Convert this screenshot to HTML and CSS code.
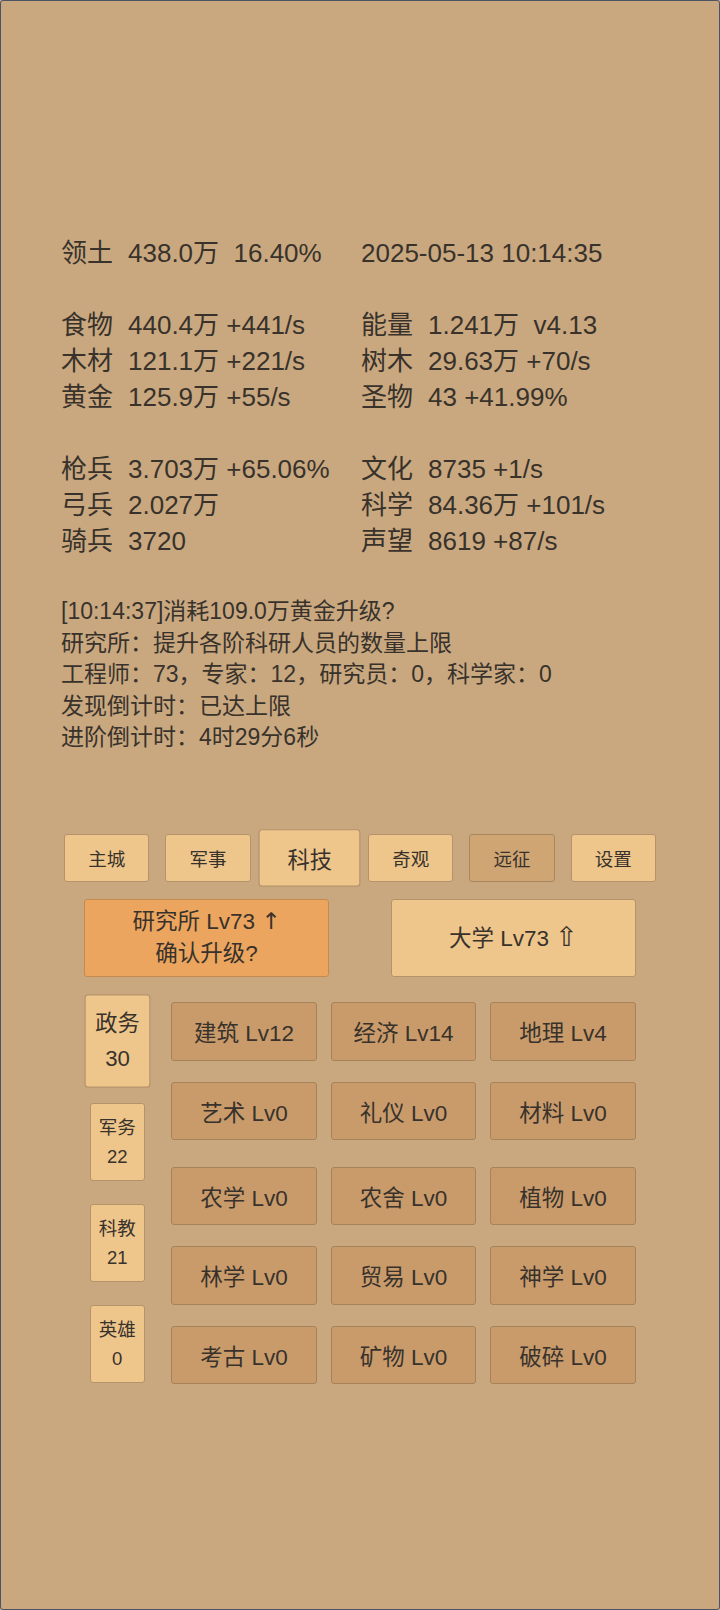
FILE: index.html
```html
<!DOCTYPE html>
<html lang="zh">
<head>
<meta charset="utf-8">
<title>科技</title>
<link rel="stylesheet" href="styles.css">
</head>
<body>
<div class="frame">
  <div class="stats">
    <div class="cell"><span class="lbl">领土</span><span class="val">438.0万  16.40%</span></div>
    <div class="cell"><span class="val">2025-05-13 10:14:35</span></div>
    <div class="cell blank"></div><div class="cell blank"></div>
    <div class="cell"><span class="lbl">食物</span><span class="val">440.4万 +441/s</span></div>
    <div class="cell"><span class="lbl">能量</span><span class="val">1.241万  v4.13</span></div>
    <div class="cell"><span class="lbl">木材</span><span class="val">121.1万 +221/s</span></div>
    <div class="cell"><span class="lbl">树木</span><span class="val">29.63万 +70/s</span></div>
    <div class="cell"><span class="lbl">黄金</span><span class="val">125.9万 +55/s</span></div>
    <div class="cell"><span class="lbl">圣物</span><span class="val">43 +41.99%</span></div>
    <div class="cell blank"></div><div class="cell blank"></div>
    <div class="cell"><span class="lbl">枪兵</span><span class="val">3.703万 +65.06%</span></div>
    <div class="cell"><span class="lbl">文化</span><span class="val">8735 +1/s</span></div>
    <div class="cell"><span class="lbl">弓兵</span><span class="val">2.027万</span></div>
    <div class="cell"><span class="lbl">科学</span><span class="val">84.36万 +101/s</span></div>
    <div class="cell"><span class="lbl">骑兵</span><span class="val">3720</span></div>
    <div class="cell"><span class="lbl">声望</span><span class="val">8619 +87/s</span></div>
  </div>

  <div class="log">
    <div>[10:14:37]消耗109.0万黄金升级?</div>
    <div>研究所：提升各阶科研人员的数量上限</div>
    <div>工程师：73，专家：12，研究员：0，科学家：0</div>
    <div>发现倒计时：已达上限</div>
    <div>进阶倒计时：4时29分6秒</div>
  </div>

  <div class="tabs">
    <div class="tab">主城</div>
    <div class="tab">军事</div>
    <div class="tab active">科技</div>
    <div class="tab">奇观</div>
    <div class="tab dim">远征</div>
    <div class="tab">设置</div>
  </div>

  <div class="builds">
    <div class="build confirm"><div>研究所 Lv73 <span class="arrow">↑</span></div><div>确认升级?</div></div>
    <div class="build"><div>大学 Lv73 <span class="arrow big">⇧</span></div></div>
  </div>

  <div class="main">
    <div class="side">
      <div class="sitem active"><div>政务</div><div>30</div></div>
      <div class="sitem"><div>军务</div><div>22</div></div>
      <div class="sitem"><div>科教</div><div>21</div></div>
      <div class="sitem"><div>英雄</div><div>0</div></div>
    </div>
    <div class="grid">
      <div class="tech">建筑 Lv12</div>
      <div class="tech">经济 Lv14</div>
      <div class="tech">地理 Lv4</div>
      <div class="tech">艺术 Lv0</div>
      <div class="tech">礼仪 Lv0</div>
      <div class="tech">材料 Lv0</div>
      <div class="tech">农学 Lv0</div>
      <div class="tech">农舍 Lv0</div>
      <div class="tech">植物 Lv0</div>
      <div class="tech">林学 Lv0</div>
      <div class="tech">贸易 Lv0</div>
      <div class="tech">神学 Lv0</div>
      <div class="tech">考古 Lv0</div>
      <div class="tech">矿物 Lv0</div>
      <div class="tech">破碎 Lv0</div>
    </div>
  </div>
</div>
</body>
</html>
```

FILE: styles.css
```css
* { box-sizing: border-box; }
html, body { margin: 0; padding: 0; }
body {
  font-family: "Liberation Sans", "Noto Sans CJK SC", sans-serif;
  color: #38322b;
  background: #c9a880;
}
.frame {
  width: 720px;
  height: 1610px;
  border: 1px solid #4b5366;
  border-radius: 3px;
  background: #c9a880;
  padding-top: 234px;
  overflow: hidden;
}
.stats {
  display: grid;
  grid-template-columns: 300px 300px;
  grid-auto-rows: 36px;
  padding-left: 60px;
  font-size: 26px;
  line-height: 36px;
}
.cell { white-space: pre; display: flex; }
.lbl { width: 67px; flex: none; }
.val { white-space: pre; }

.log {
  margin-top: 37px;
  padding-left: 60px;
  font-size: 23px;
  line-height: 31.6px;
}

.tabs {
  margin-top: 80px;
  display: flex;
  justify-content: center;
  gap: 16px;
}
.tab {
  width: 85.33px;
  height: 48.4px;
  background: #eec68b;
  border: 1px solid #b5926a;
  border-radius: 3px;
  display: flex;
  align-items: center;
  justify-content: center;
  font-size: 18.5px;
}
.tab.active { transform: scale(1.2); }
.tab.dim { background: #cfa574; border-color: #a88660; }

.builds {
  margin-top: 16.3px;
  display: flex;
  justify-content: center;
  gap: 62px;
}
.build {
  width: 245px;
  height: 78px;
  background: #eec68b;
  border: 1px solid #b5926a;
  border-radius: 3px;
  display: flex;
  flex-direction: column;
  align-items: center;
  justify-content: center;
  font-size: 22.5px;
  line-height: 32px;
}
.build.confirm { background: #eca55f; border-color: #c58a52; }
.arrow { font-family: "DejaVu Sans", sans-serif; font-size: 23px; }
.arrow.big { font-size: 27px; line-height: 32px; }

.main {
  margin-top: 25.5px;
  display: flex;
  justify-content: center;
  gap: 21px;
}
.side {
  width: 66px;
  display: flex;
  flex-direction: column;
  align-items: center;
  gap: 23px;
}
.sitem {
  width: 55px;
  height: 78px;
  background: #eec68b;
  border: 1px solid #b5926a;
  border-radius: 3px;
  display: flex;
  flex-direction: column;
  align-items: center;
  justify-content: center;
  font-size: 18.5px;
  line-height: 29px;
}
.sitem.active { transform: scale(1.2); }
.grid {
  display: grid;
  grid-template-columns: repeat(3, 145.5px);
  grid-template-rows: 58.5px 58.5px 64px 58.5px 58.5px;
  column-gap: 14px;
  row-gap: 21px;
  align-items: end;
}
.tech {
  height: 58.5px;
  background: #c99b6b;
  border: 1px solid #a5835a;
  border-radius: 3px;
  display: flex;
  align-items: center;
  justify-content: center;
  font-size: 22.5px;
}
```
